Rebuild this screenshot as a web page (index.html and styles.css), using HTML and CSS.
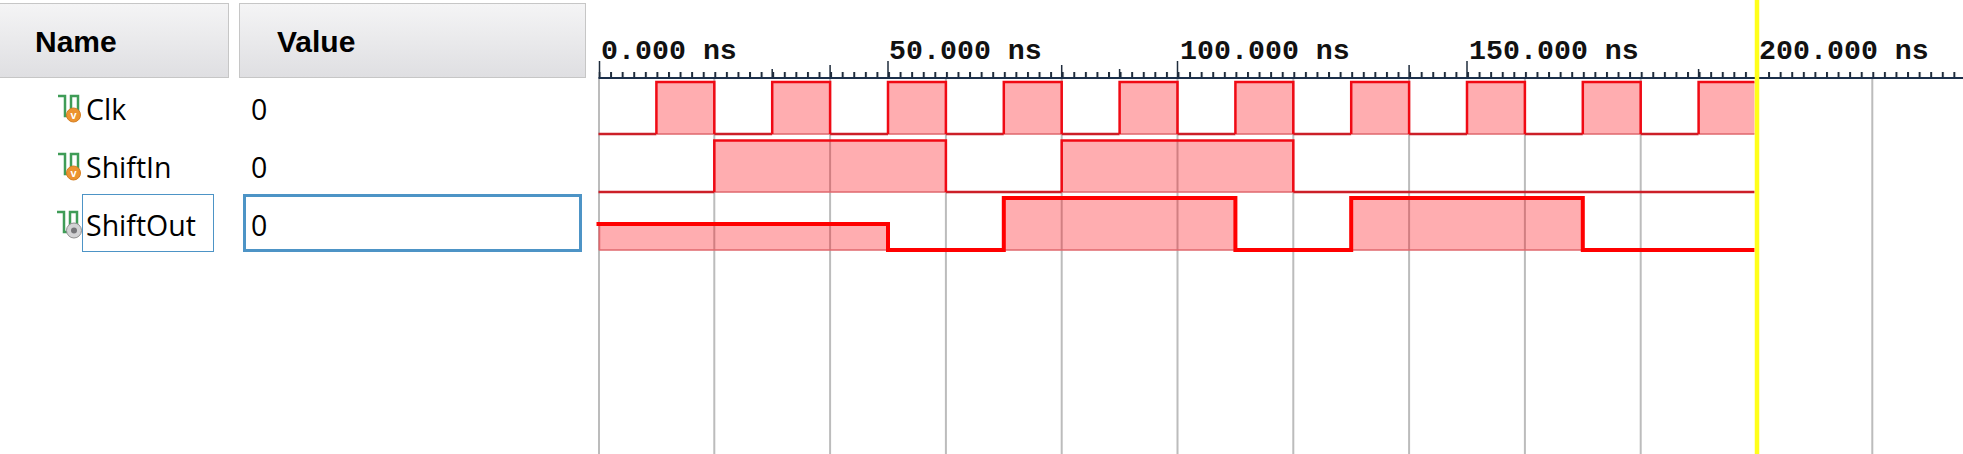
FILE: index.html
```html
<!DOCTYPE html>
<html lang="en">
<head>
    <meta charset="UTF-8">
    <title>Waveform</title>
    <link rel="stylesheet" href="styles.css">
</head>
<body>
    <div class="signals">
        <div class="header">
            <div class="head-cell head-name">Name</div>
            <div class="head-cell head-value">Value</div>
        </div>

        <div class="row">
            <div class="name-cell">
                <svg class="icon" viewBox="0 0 26 30">
                    <polyline class="icon-wave" points="1,3 8,3 8,23 14,23 14,3 21,3 21,22"/>
                    <circle class="icon-input" cx="16.5" cy="22" r="7"/>
                    <text class="icon-v" x="16.5" y="26">v</text>
                </svg>
                <span class="label">Clk</span>
            </div>
            <div class="value">0</div>
        </div>

        <div class="row">
            <div class="name-cell">
                <svg class="icon" viewBox="0 0 26 30">
                    <polyline class="icon-wave" points="1,3 8,3 8,23 14,23 14,3 21,3 21,22"/>
                    <circle class="icon-input" cx="16.5" cy="22" r="7"/>
                    <text class="icon-v" x="16.5" y="26">v</text>
                </svg>
                <span class="label">ShiftIn</span>
            </div>
            <div class="value">0</div>
        </div>

        <div class="row selected">
            <div class="name-cell">
                <svg class="icon" viewBox="0 0 26 30">
                    <polyline class="icon-wave" points="0,3 7,3 7,23 13,23 13,3 20,3 20,22"/>
                    <circle class="icon-output" cx="17" cy="21.5" r="7.5"/>
                    <circle class="icon-dot" cx="17" cy="21.5" r="3"/>
                </svg>
                <span class="label">ShiftOut</span>
            </div>
            <div class="value">0</div>
        </div>
    </div>

    <!-- viewBox uses page coordinates, 5.79px per ns from x=599 -->
    <svg class="wave" width="1364" height="454" viewBox="599.5 0 1364 454">
        <defs>
            <pattern id="minorTicks" x="599" y="72" width="11.58" height="6" patternUnits="userSpaceOnUse">
                <rect class="tick" x="0" y="0" width="2" height="6"/>
            </pattern>
        </defs>

        <!-- grid -->
        <path class="grid" d="M599.5 78V454M714.8 78V454M830.6 78V454M946.4 78V454M1062.2 78V454M1178 78V454M1293.8 78V454M1409.6 78V454M1525.4 78V454M1641.2 78V454M1872.8 78V454"/>

        <!-- ruler -->
        <rect x="599" y="72" width="1365" height="6" fill="url(#minorTicks)"/>
        <path class="ruler-tall" d="M600 61V78M888.5 61V78M1178 61V78M1467.5 61V78"/>
        <path class="ruler-mid" d="M772.7 69V78M830.6 65V78M1062.2 65V78M1120.1 69V78M1409.6 65V78M1699.1 69V78"/>
        <line class="ruler-line" x1="599" y1="78" x2="1964" y2="78"/>
        <text class="ruler-text" x="601.5" y="59">0.000 ns</text>
        <text class="ruler-text" x="889.5" y="59">50.000 ns</text>
        <text class="ruler-text" x="1180.5" y="59">100.000 ns</text>
        <text class="ruler-text" x="1469.5" y="59">150.000 ns</text>
        <text class="ruler-text" x="1759.5" y="59">200.000 ns</text>

        <!-- Clk -->
        <path class="fill" d="M656.9 82H714.8V134H656.9ZM772.7 82H830.6V134H772.7ZM888.5 82H946.4V134H888.5ZM1004.3 82H1062.2V134H1004.3ZM1120.1 82H1178V134H1120.1ZM1235.9 82H1293.8V134H1235.9ZM1351.7 82H1409.6V134H1351.7ZM1467.5 82H1525.4V134H1467.5ZM1583.3 82H1641.2V134H1583.3ZM1699.1 82H1755V134H1699.1Z"/>
        <path class="edge" d="M656.9 134H714.8M772.7 134H830.6M888.5 134H946.4M1004.3 134H1062.2M1120.1 134H1178M1235.9 134H1293.8M1351.7 134H1409.6M1467.5 134H1525.4M1583.3 134H1641.2M1699.1 134H1755"/>
        <path class="low" d="M599 134H656.9M714.8 134H772.7M830.6 134H888.5M946.4 134H1004.3M1062.2 134H1120.1M1178 134H1235.9M1293.8 134H1351.7M1409.6 134H1467.5M1525.4 134H1583.3M1641.2 134H1699.1"/>
        <path class="high" d="M656.9 134V82H714.8V134M772.7 134V82H830.6V134M888.5 134V82H946.4V134M1004.3 134V82H1062.2V134M1120.1 134V82H1178V134M1235.9 134V82H1293.8V134M1351.7 134V82H1409.6V134M1467.5 134V82H1525.4V134M1583.3 134V82H1641.2V134M1699.1 134V82H1755"/>

        <!-- ShiftIn -->
        <path class="fill" d="M714.8 140.5H946.4V192H714.8ZM1062.2 140.5H1293.8V192H1062.2Z"/>
        <path class="edge" d="M714.8 192H946.4M1062.2 192H1293.8"/>
        <path class="low" d="M599 192H714.8M946.4 192H1062.2M1293.8 192H1755"/>
        <path class="high" d="M714.8 192V140.5H946.4V192M1062.2 192V140.5H1293.8V192"/>

        <!-- ShiftOut -->
        <path class="fill" d="M599 224H888.5V250H599ZM1004.3 198H1235.9V250H1004.3ZM1351.7 198H1583.3V250H1351.7Z"/>
        <path class="edge" d="M600 224V250H888.5M1004.3 250H1235.9M1351.7 250H1583.3"/>
        <path class="bold" d="M597 224H888.5V250H1004.3V198H1235.9V250H1351.7V198H1583.3V250H1755"/>

        <!-- marker -->
        <line class="marker" x1="1757.5" y1="0" x2="1757.5" y2="454"/>
    </svg>
</body>
</html>
```

FILE: styles.css
```css
body {
    margin: 0;
    display: flex;
    height: 454px;
    overflow: hidden;
    background-color: white;
    font-family: "Open Sans", sans-serif;
    color: black;
}

.signals {
    flex: none;
    width: 599px;
}

.header {
    display: flex;
    gap: 10px;
    margin-top: 3px;
}

.head-cell {
    box-sizing: border-box;
    height: 75px;
    padding-top: 3px;
    display: flex;
    align-items: center;
    font-family: "Liberation Sans", Arial, sans-serif;
    font-size: 30px;
    font-weight: bold;
    border: 1px solid #c6c6c6;
    background: linear-gradient(#f4f4f5, #dfdfe2);
}

.head-name {
    width: 229px;
    padding-left: 35px;
    border-left: none;
}

.head-value {
    width: 347px;
    padding-left: 37px;
}

.row {
    display: flex;
    height: 58px;
    font-size: 28.5px;
}

.name-cell {
    flex: none;
    width: 239px;
    padding-left: 57px;
    box-sizing: border-box;
    display: flex;
    align-items: center;
}

.icon {
    flex: none;
    width: 26px;
    height: 30px;
    margin-top: 1px;
}

.icon-wave {
    fill: none;
    stroke: #3f9c57;
    stroke-width: 2.5;
}

.icon-input {
    fill: #ec9330;
    stroke: #d57f22;
}

.icon-v {
    fill: white;
    font-family: "Liberation Sans", Arial, sans-serif;
    font-size: 11px;
    font-weight: bold;
    text-anchor: middle;
}

.icon-output {
    fill: #d2d2d4;
    stroke: #8f8f8f;
}

.icon-dot {
    fill: #76767a;
}

.label {
    box-sizing: border-box;
    height: 58px;
    line-height: 58px;
    margin-left: -1px;
    padding-top: 1px;
    padding-left: 3px;
    border: 1px solid transparent;
}

.value {
    box-sizing: border-box;
    width: 339px;
    height: 58px;
    line-height: 54px;
    margin-left: 4px;
    padding-top: 1px;
    padding-left: 5px;
    border: 3px solid transparent;
}

.selected .label {
    width: 132px;
    border-color: #4d94c6;
}

.selected .value {
    border-color: #4d94c6;
}

.wave {
    flex: none;
    display: block;
    overflow: visible;
}

.grid {
    fill: none;
    stroke: #bcbcbc;
    stroke-width: 2;
}

.tick {
    fill: #1f2c3c;
}

.ruler-tall, .ruler-mid {
    fill: none;
    stroke: #1f2c3c;
    stroke-width: 1.5;
}

.ruler-line {
    stroke: #1b2f4a;
    stroke-width: 2;
}

.ruler-text {
    font-family: "Liberation Mono", "Courier New", monospace;
    font-size: 28.3px;
    font-weight: bold;
    fill: #111;
}

.fill {
    fill: rgba(255, 0, 8, 0.32);
}

.edge {
    fill: none;
    stroke: #e0686e;
    stroke-width: 1.5;
}

.low {
    fill: none;
    stroke: #cc1f28;
    stroke-width: 2.5;
}

.high {
    fill: none;
    stroke: #f00a14;
    stroke-width: 2.5;
}

.bold {
    fill: none;
    stroke: #ff0000;
    stroke-width: 4;
}

.marker {
    stroke: #ffff1a;
    stroke-width: 4.5;
}
```
